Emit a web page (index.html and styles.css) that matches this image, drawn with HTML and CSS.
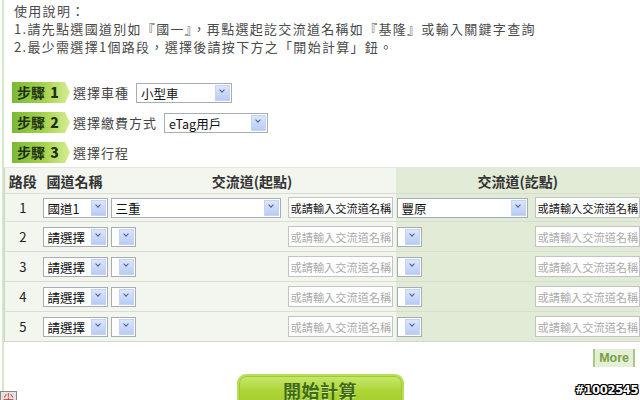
FILE: index.html
```html
<!DOCTYPE html>
<html lang="zh-Hant">
<head>
<meta charset="utf-8">
<link rel="stylesheet" href="styles.css">
</head>
<body>
<div class="page">
  <div class="intro">
    <p>使用說明：</p>
    <p>1.請先點選國道別如『國一』，再點選起訖交流道名稱如『基隆』或輸入關鍵字查詢</p>
    <p>2.最少需選擇1個路段，選擇後請按下方之「開始計算」鈕。</p>
  </div>
  <div class="steps">
    <div class="step">
      <span class="badge">步驟 <b>1</b></span>
      <span class="label">選擇車種</span>
      <div class="sel w96"><span class="val">小型車</span><span class="btn"></span></div>
    </div>
    <div class="step">
      <span class="badge">步驟 <b>2</b></span>
      <span class="label">選擇繳費方式</span>
      <div class="sel w104"><span class="val">eTag用戶</span><span class="btn"></span></div>
    </div>
    <div class="step">
      <span class="badge">步驟 <b>3</b></span>
      <span class="label">選擇行程</span>
    </div>
  </div>
  <table class="route">
    <colgroup>
      <col class="c1"><col class="c2"><col class="c3"><col class="c4"><col class="c5"><col class="c6">
    </colgroup>
    <tr class="head">
      <th class="l">路段</th>
      <th class="l">國道名稱</th>
      <th class="l" colspan="2">交流道(起點)</th>
      <th class="r endh" colspan="2">交流道(訖點)</th>
    </tr>
    <tr class="first">
      <td class="l num">1</td>
      <td class="l p2"><div class="sel w64"><span class="val">國道1</span><span class="btn"></span></div></td>
      <td class="l p2"><div class="sel w170"><span class="val">三重</span><span class="btn"></span></div></td>
      <td class="l p4"><input class="ic" type="text" value="或請輸入交流道名稱"></td>
      <td class="r p1"><div class="sel w131"><span class="val">豐原</span><span class="btn"></span></div></td>
      <td class="r p3"><input class="ic" type="text" value="或請輸入交流道名稱"></td>
    </tr>
    <tr>
      <td class="l num">2</td>
      <td class="l p2"><div class="sel w64"><span class="val">請選擇</span><span class="btn"></span></div></td>
      <td class="l p2"><div class="sel w25"><span class="val"></span><span class="btn"></span></div></td>
      <td class="l p4"><input class="ic" type="text" placeholder="或請輸入交流道名稱"></td>
      <td class="r p1"><div class="sel w25"><span class="val"></span><span class="btn"></span></div></td>
      <td class="r p3"><input class="ic" type="text" placeholder="或請輸入交流道名稱"></td>
    </tr>
    <tr>
      <td class="l num">3</td>
      <td class="l p2"><div class="sel w64"><span class="val">請選擇</span><span class="btn"></span></div></td>
      <td class="l p2"><div class="sel w25"><span class="val"></span><span class="btn"></span></div></td>
      <td class="l p4"><input class="ic" type="text" placeholder="或請輸入交流道名稱"></td>
      <td class="r p1"><div class="sel w25"><span class="val"></span><span class="btn"></span></div></td>
      <td class="r p3"><input class="ic" type="text" placeholder="或請輸入交流道名稱"></td>
    </tr>
    <tr>
      <td class="l num">4</td>
      <td class="l p2"><div class="sel w64"><span class="val">請選擇</span><span class="btn"></span></div></td>
      <td class="l p2"><div class="sel w25"><span class="val"></span><span class="btn"></span></div></td>
      <td class="l p4"><input class="ic" type="text" placeholder="或請輸入交流道名稱"></td>
      <td class="r p1"><div class="sel w25"><span class="val"></span><span class="btn"></span></div></td>
      <td class="r p3"><input class="ic" type="text" placeholder="或請輸入交流道名稱"></td>
    </tr>
    <tr>
      <td class="l num">5</td>
      <td class="l p2"><div class="sel w64"><span class="val">請選擇</span><span class="btn"></span></div></td>
      <td class="l p2"><div class="sel w25"><span class="val"></span><span class="btn"></span></div></td>
      <td class="l p4"><input class="ic" type="text" placeholder="或請輸入交流道名稱"></td>
      <td class="r p1"><div class="sel w25"><span class="val"></span><span class="btn"></span></div></td>
      <td class="r p3"><input class="ic" type="text" placeholder="或請輸入交流道名稱"></td>
    </tr>
  </table>
  <div class="more-row"><span class="more">More</span></div>
  <div class="submit-row"><button class="start" type="button">開始計算</button></div>
</div>
<div class="corner-icon"><span>尖</span></div>
<div class="wm">#1002545</div>
</body>
</html>
```

FILE: styles.css
```css
html, body {
  margin: 0;
  padding: 0;
  background: #ffffff;
  overflow: hidden;
  height: 400px;
}
body {
  font-family: "Noto Sans CJK TC", "Noto Sans", sans-serif;
  color: #333;
  position: relative;
}
.page {
  margin-left: 2px;
  border-left: 2px solid #d3e8c6;
  height: 392px;
}
.intro {
  padding: 2px 0 0 10px;
  color: #4a4a4a;
  font-size: 13px;
  letter-spacing: 1.3px;
}
.intro p {
  margin: 0;
  line-height: 18px;
  white-space: nowrap;
}
.steps {
  margin-top: 26px;
  padding-left: 8px;
}
.step {
  display: flex;
  align-items: center;
  height: 21px;
  margin-bottom: 9px;
}
.step:last-child { margin-bottom: 0; }
.badge {
  width: 58px;
  height: 21px;
  box-sizing: border-box;
  padding-left: 5px;
  font-size: 14px;
  font-weight: bold;
  line-height: 21px;
  color: #1c3210;
  background: linear-gradient(to right, #7ab934 0%, #a6d24c 55%, #d6ee94 100%);
  clip-path: polygon(0 0, 53px 0, 58px 50%, 53px 100%, 0 100%);
  white-space: nowrap;
}
.badge b {
  margin-left: 2px;
}
.label {
  margin-left: 3px;
  font-size: 13px;
  letter-spacing: 1px;
  color: #444;
  white-space: nowrap;
}
.sel {
  display: flex;
  height: 20px;
  box-sizing: border-box;
  border: 1px solid #a7adb6;
  background: #fff;
  font-size: 12.5px;
  color: #111;
}
.step .sel { margin-left: 7px; }
.sel .val {
  flex: 1;
  padding: 1px 0 0 4px;
  line-height: 17px;
  white-space: nowrap;
}
.sel .btn {
  position: relative;
  width: 15px;
  margin: 1px;
  box-sizing: border-box;
  border: 1px solid #c6d4f3;
  background: linear-gradient(#dbe6fd, #b9cbf6);
}
.sel .btn::after {
  content: "";
  position: absolute;
  left: 4px;
  top: 2px;
  width: 3px;
  height: 3px;
  border-right: 1.5px solid #4b5f8e;
  border-bottom: 1.5px solid #4b5f8e;
  transform: rotate(45deg);
}
.w96 { width: 96px; }
.w104 { width: 104px; }
.w64 { width: 65px; }
.w170 { width: 170px; }
.w131 { width: 131px; }
.w25 { width: 25px; }

.route {
  border-collapse: collapse;
  table-layout: fixed;
  width: 640px;
  margin-top: 4px;
  border-left: 1px solid #cfd4c7;
  border-bottom: 1px solid #d3d8cc;
  border-top: 1px solid #e2e6dc;
}
.c1 { width: 36px; }
.c2 { width: 68px; }
.c3 { width: 175px; }
.c4 { width: 112px; }
.c5 { width: 136px; }
.c6 { width: 113px; }
.route th, .route td {
  padding: 0;
  vertical-align: middle;
}
.route td { border-top: 1px solid #d8ddd1; }
.route .l { background: #f3f5ef; }
.route .r { background: #e1ebd6; }
.head th {
  height: 25px;
  font-size: 14px;
  font-weight: bold;
  color: #333;
  text-align: center;
  white-space: nowrap;
}
.head th.endh {
  text-align: left;
  padding-left: 82px;
}
.first td { height: 27px; }
.route tr:not(.head):not(.first) td { height: 29px; }
.num {
  text-align: center;
  font-size: 13px;
  color: #222;
}
.p1 { padding-left: 1px !important; }
.p2 { padding-left: 2px !important; }
.p3 { padding-left: 3px !important; }
.p4 { padding-left: 4px !important; }
.ic {
  display: block;
  width: 105px;
  height: 21px;
  box-sizing: border-box;
  border: 1px solid #c4c4c4;
  padding: 0 0 0 2px;
  font-family: "Noto Sans CJK TC", sans-serif;
  font-size: 11.2px;
  color: #111;
  background: #fff;
  outline: none;
}
.ic::placeholder { color: #a9a9a9; }

.more-row {
  display: flex;
  justify-content: flex-end;
  padding-right: 5px;
  margin-top: 7px;
}
.more {
  display: block;
  height: 18px;
  line-height: 18px;
  padding: 0 4px;
  border-left: 2px solid #a9c985;
  border-right: 2px solid #a9c985;
  background: #e5efd8;
  color: #78a03e;
  font-family: "Liberation Sans", sans-serif;
  font-weight: bold;
  font-size: 12.5px;
}
.submit-row {
  display: flex;
  justify-content: center;
  margin-top: 7px;
  margin-left: -4px;
}
.start {
  width: 167px;
  height: 38px;
  border: 2px solid #b9de5a;
  border-radius: 9px;
  background: linear-gradient(#c8e870 0%, #acd535 45%, #9fcb28 100%);
  box-shadow: inset 0 0 0 1px #9ec92f;
  font-family: "Noto Sans CJK TC", sans-serif;
  font-size: 18px;
  font-weight: bold;
  color: #3d6a12;
  letter-spacing: 0.5px;
  padding: 0 0 6px 0;
  text-shadow: 0 1px 0 #d8f09a;
}
.corner-icon {
  position: absolute;
  left: 0;
  top: 391px;
  width: 17px;
  height: 12px;
  box-sizing: border-box;
  border: 1px solid #8a8a8a;
  background: #e7e2e2;
  overflow: hidden;
}
.corner-icon span {
  display: block;
  font-size: 11px;
  line-height: 12px;
  color: #c0393b;
  text-align: center;
}
.wm {
  position: absolute;
  left: 575px;
  top: 383px;
  font-family: "DejaVu Sans", sans-serif;
  font-weight: bold;
  font-size: 11.5px;
  color: #fff;
  letter-spacing: -0.3px;
  text-shadow: -1px -1px 0 #000, 1px -1px 0 #000, -1px 1px 0 #000, 1px 1px 0 #000, 0 1px 0 #000, 0 -1px 0 #000, 1px 0 0 #000, -1px 0 0 #000;
}
```
